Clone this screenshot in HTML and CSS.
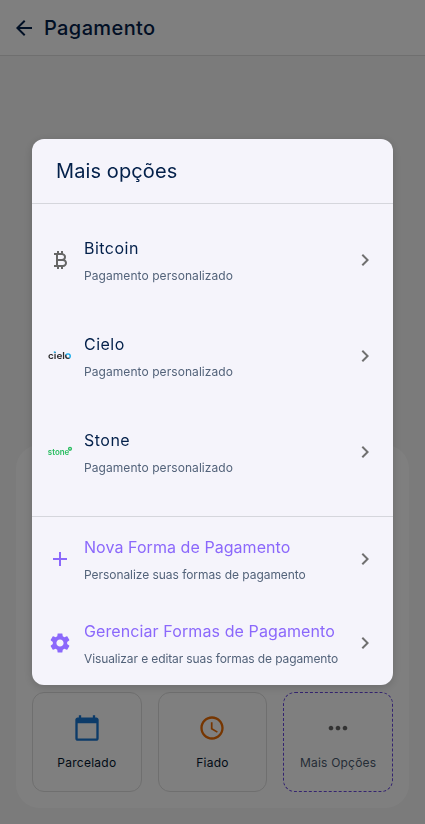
FILE: index.html
```html
<!DOCTYPE html>
<html lang="pt-BR">
<head>
<meta charset="utf-8">
<meta name="viewport" content="width=device-width, initial-scale=1">
<title>Pagamento</title>
<link rel="stylesheet" href="styles.css">
</head>
<body>
<div class="page">
  <header class="topbar">
    <svg class="back" viewBox="0 0 24 24"><path d="M20 11H7.83l5.59-5.59L12 4l-8 8 8 8 1.410-1.410L7.830 13H20z"/></svg>
    <h1><span class="t-page">Pagamento</span></h1>
  </header>
  <main class="content">
    <section class="panel">
      <div class="tile">
        <svg class="tile-icon blue" viewBox="0 0 24 24"><path d="M20 3h-1V1h-2v2H7V1H5v2H4c-1.100 0-2 .9-2 2v16c0 1.100.9 2 2 2h16c1.100 0 2-.9 2-2V5c0-1.100-.9-2-2-2zm0 18H4V8h16z"/></svg>
        <span class="t-parcelado">Parcelado</span>
      </div>
      <div class="tile">
        <svg class="tile-icon orange" viewBox="0 0 24 24"><path d="M11.990 2C6.470 2 2 6.480 2 12s4.470 10 9.990 10C17.520 22 22 17.520 22 12S17.520 2 11.990 2M12 20c-4.420 0-8-3.580-8-8s3.580-8 8-8 8 3.580 8 8-3.580 8-8 8m.5-13H11v6l5.250 3.150.75-1.230-4.500-2.670z"/></svg>
        <span class="t-fiado">Fiado</span>
      </div>
      <div class="tile more">
        <svg class="tile-icon" viewBox="0 0 24 24"><path d="M6 10c-1.100 0-2 .9-2 2s.9 2 2 2 2-.9 2-2-.9-2-2-2m12 0c-1.100 0-2 .9-2 2s.9 2 2 2 2-.9 2-2-.9-2-2-2m-6 0c-1.100 0-2 .9-2 2s.9 2 2 2 2-.9 2-2-.9-2-2-2"/></svg>
        <span class="t-mais">Mais Opções</span>
      </div>
    </section>
  </main>
</div>
<div class="overlay">
  <div class="dialog" role="dialog">
    <h2><span class="t-title">Mais opções</span></h2>
    <div class="methods">
      <div class="row">
        <svg class="icon" viewBox="0 0 24 24"><path d="M17.060 11.570c.59-.69.94-1.590.94-2.570 0-1.860-1.270-3.430-3-3.870V3h-2v2h-2V3H9v2H6v2h2v10H6v2h3v2h2v-2h2v2h2v-2c2.210 0 4-1.790 4-4 0-1.450-.78-2.730-1.940-3.430M10 7h4c1.100 0 2 .9 2 2s-.9 2-2 2h-4zm5 10h-5v-4h5c1.100 0 2 .9 2 2s-.9 2-2 2"/></svg>
        <div class="text"><strong class="t-bitcoin">Bitcoin</strong><small class="t-custom">Pagamento personalizado</small></div>
        <svg class="chevron" viewBox="0 0 24 24"><path d="M10 6 8.590 7.410 13.170 12l-4.580 4.590L10 18l6-6z"/></svg>
      </div>
      <div class="row">
        <svg class="icon cielo" viewBox="0 0 24 24"><defs><linearGradient id="ring" x1="0" x2="1" y1="1" y2="0"><stop offset=".35" stop-color="#2a2a2c"/><stop offset=".5" stop-color="#12a9e8"/></linearGradient></defs><text x="0" y="15" textLength="17" lengthAdjust="spacingAndGlyphs">ciel</text><circle cx="20" cy="12.100" r="2.250" fill="none" stroke="url(#ring)" stroke-width="1.400"/><path fill="#12a9e8" d="M5.800 7.400h1.700v1.400H5.800z"/></svg>
        <div class="text"><strong class="t-cielo">Cielo</strong><small class="t-custom">Pagamento personalizado</small></div>
        <svg class="chevron" viewBox="0 0 24 24"><path d="M10 6 8.590 7.410 13.170 12l-4.580 4.590L10 18l6-6z"/></svg>
      </div>
      <div class="row">
        <svg class="icon stone" viewBox="0 0 24 24"><text x="-.2" y="15" textLength="21.500" lengthAdjust="spacingAndGlyphs">stone</text><circle cx="22" cy="8.800" r="1.400" fill="none" stroke="#2abd61" stroke-width="1.400"/></svg>
        <div class="text"><strong class="t-stone">Stone</strong><small class="t-custom">Pagamento personalizado</small></div>
        <svg class="chevron" viewBox="0 0 24 24"><path d="M10 6 8.590 7.410 13.170 12l-4.580 4.590L10 18l6-6z"/></svg>
      </div>
    </div>
    <div class="actions">
      <div class="row">
        <svg class="icon" viewBox="0 0 24 24"><path d="M19 13h-6v6h-2v-6H5v-2h6V5h2v6h6z"/></svg>
        <div class="text"><strong class="t-nova">Nova Forma de Pagamento</strong><small class="t-personalize">Personalize suas formas de pagamento</small></div>
        <svg class="chevron" viewBox="0 0 24 24"><path d="M10 6 8.590 7.410 13.170 12l-4.580 4.590L10 18l6-6z"/></svg>
      </div>
      <div class="row">
        <svg class="icon" viewBox="0 0 24 24"><path d="M19.140 12.940c.04-.3.06-.61.06-.94 0-.32-.02-.64-.07-.94l2.030-1.580c.18-.14.23-.41.12-.61l-1.920-3.320c-.12-.22-.37-.29-.59-.22l-2.390.96c-.5-.38-1.030-.7-1.620-.94l-.36-2.540c-.04-.24-.24-.41-.48-.41h-3.840c-.24 0-.43.17-.47.41l-.36 2.540c-.59.24-1.130.57-1.620.94l-2.390-.96c-.22-.08-.47 0-.59.22L2.740 8.870c-.12.21-.08.47.12.61l2.030 1.580c-.05.3-.09.63-.09.94s.02.64.07.94l-2.030 1.580c-.18.14-.23.41-.12.61l1.920 3.320c.12.22.37.29.59.22l2.390-.96c.5.38 1.030.7 1.620.94l.36 2.540c.05.24.24.41.48.41h3.840c.24 0 .44-.17.47-.41l.36-2.540c.59-.24 1.130-.56 1.620-.94l2.390.96c.22.08.47 0 .59-.22l1.920-3.320c.12-.22.07-.47-.12-.61zM12 15.600c-1.980 0-3.600-1.620-3.600-3.600s1.620-3.600 3.600-3.600 3.600 1.620 3.600 3.600-1.620 3.600-3.600 3.600"/></svg>
        <div class="text"><strong class="t-gerenciar">Gerenciar Formas de Pagamento</strong><small class="t-visualizar">Visualizar e editar suas formas de pagamento</small></div>
        <svg class="chevron" viewBox="0 0 24 24"><path d="M10 6 8.590 7.410 13.170 12l-4.580 4.590L10 18l6-6z"/></svg>
      </div>
    </div>
  </div>
</div>
</body>
</html>
```
FILE: styles.css
```css
* { box-sizing: border-box; }
body { margin: 0; font-family: Inter, "Liberation Sans", sans-serif; color: #03204a; overflow: hidden; }
h1, h2 { margin: 0; font-size: 20px; font-weight: 500; line-height: 32px; }
svg { display: block; flex: none; }
.page { height: 824px; background: #f7f7f7; display: flex; flex-direction: column; }
.topbar { height: 56px; flex: none; display: flex; align-items: center; gap: 8px; padding: 0 12px; background: #fff; border-bottom: 1px solid #dedede; }
.back { width: 24px; height: 24px; fill: #03204a; }
.content { flex: 1; display: flex; flex-direction: column; justify-content: flex-end; padding: 16px; }
.panel { height: 363px; border-radius: 24px; background: #fff; padding: 16px; display: grid; grid-template-columns: repeat(3, 1fr); gap: 16px; align-content: end; }
.tile { height: 100px; border: 1px solid #dedede; border-radius: 12px; display: flex; flex-direction: column; align-items: center; padding-top: 19px; gap: 9px; font-size: 12px; line-height: 20px; white-space: nowrap; color: #03152e; }
.tile.more { border: 1px dashed #6848e0; color: #4b5a6e; }
.tile-icon { width: 28px; height: 32px; fill: #666; }
.blue { fill: #1976d2; }
.orange { fill: #ed6c02; }
.overlay { position: fixed; inset: 0; background: rgba(0, 0, 0, .5); display: flex; align-items: center; justify-content: center; }
.dialog { width: 361px; height: 546px; border-radius: 12px; background: #f5f4fb; overflow: hidden; box-shadow: 0 2px 10px rgba(0, 0, 0, .16); }
.dialog h2 { height: 65px; padding: 16px 24px; font-weight: 400; border-bottom: 1px solid #d5d6dc; }
.methods { padding: 8px 0 16px; border-bottom: 1px solid #d5d6dc; }
.row { display: flex; align-items: center; height: 96px; padding: 0 16px; }
.actions .row { height: 84px; }
.icon { width: 24px; height: 24px; margin-right: 12px; fill: #666; overflow: visible; }
.cielo { fill: #2a2a2c; font-size: 9px; font-weight: 600; }
.stone { fill: #2abd61; font-size: 8.500px; font-weight: 600; }
.actions .icon { fill: #8b68fb; }
.chevron { width: 24px; height: 24px; fill: #707070; }
.text { flex: 1; display: flex; flex-direction: column; gap: 4px; white-space: nowrap; }
.text strong { font-size: 16px; line-height: 28px; font-weight: 400; position: relative; }
.text small { font-size: 12px; line-height: 20px; color: #53637a; }
.actions strong { color: #8b68fb; }
.t-page { letter-spacing: .38px; }
.t-title { letter-spacing: .1px; }
.t-bitcoin, .t-cielo, .t-stone { letter-spacing: .48px; }
.t-custom { letter-spacing: .07px; }
.t-nova { letter-spacing: .06px; }
.t-gerenciar { letter-spacing: .1px; }
.t-personalize { letter-spacing: -.05px; }
.t-visualizar { letter-spacing: -.115px; }
.t-parcelado, .t-fiado { letter-spacing: .25px; }
.t-mais { letter-spacing: .2px; }
```
